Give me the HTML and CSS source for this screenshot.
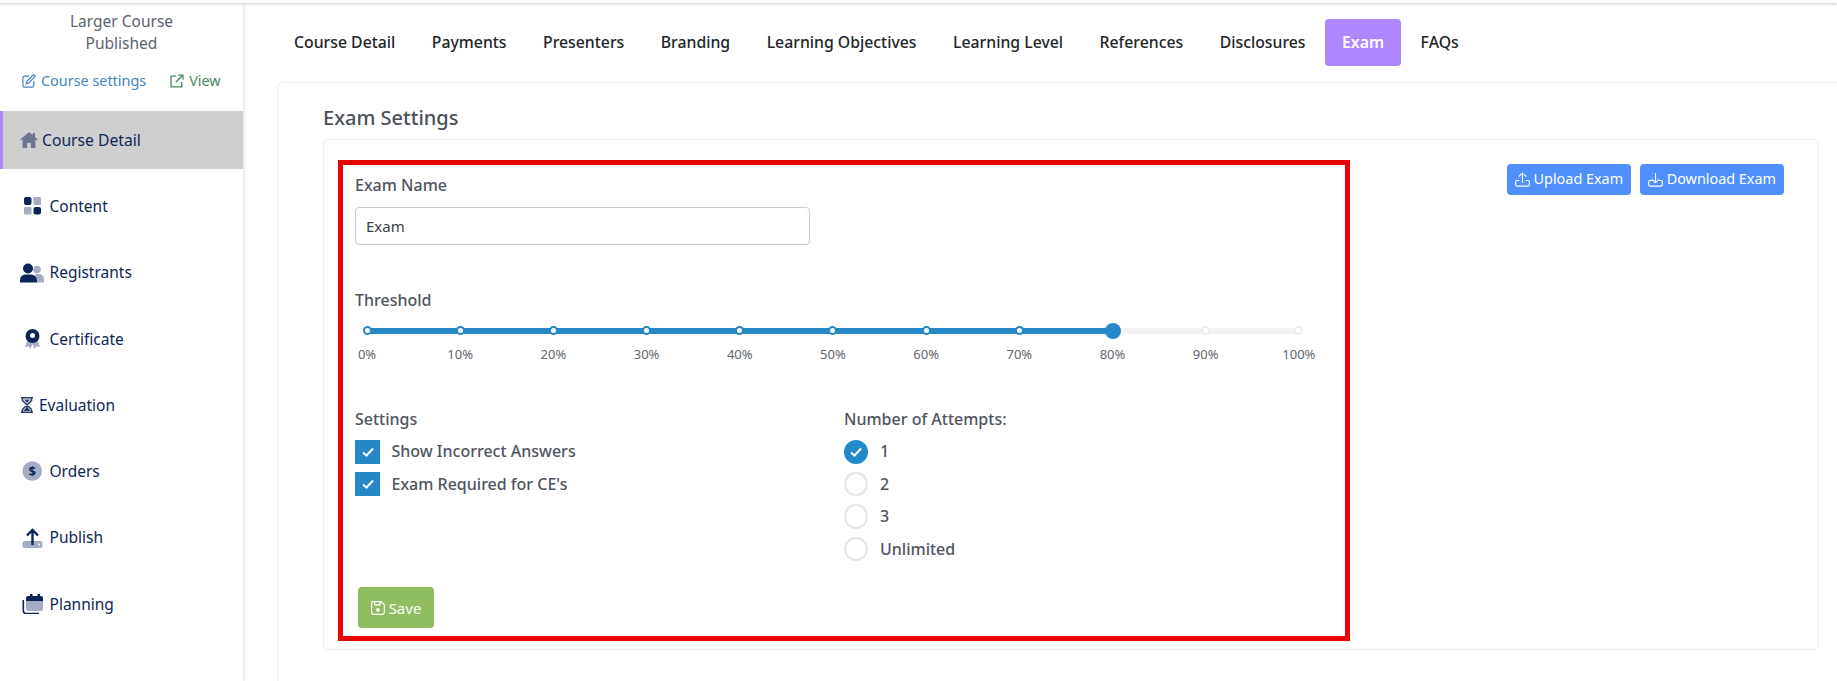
FILE: index.html
```html
<!DOCTYPE html>
<html lang="en">
<head>
<meta charset="utf-8">
<title>Exam Settings</title>
<link rel="stylesheet" href="styles.css">
</head>
<body>
<div class="topline"></div>
<div class="app">
  <aside class="sidebar">
    <div class="course-title">Larger Course<br>Published</div>
    <div class="course-links">
      <a class="link link-blue"><svg class="lnk-ico" viewBox="0 0 16 16" fill="none" stroke="currentColor" stroke-width="1.4"><path d="M8 2.5H3a2 2 0 0 0-2 2V13a2 2 0 0 0 2 2h8.5a2 2 0 0 0 2-2V8"/><path d="M5.5 8.5 12.6 1.4a1.2 1.2 0 0 1 1.9 1.9L7.5 10.4l-2.6.7z"/></svg>Course settings</a>
      <a class="link link-green"><svg class="lnk-ico" viewBox="0 0 16 16" fill="none" stroke="currentColor" stroke-width="1.5"><path d="M7 2.5H1.2v12.3h12.3V9"/><path d="M6.5 9.5 14.5 1.5M9.5 1.2h5.3v5.3"/></svg>View</a>
    </div>
    <nav class="nav">
      <a class="nav-item active"><svg class="ico ico-house" viewBox="0 0 18 16"><path fill="#6d7690" d="M9 0 .3 7.4l.8 1L2.6 7.2V16h4.6v-5h3.6v5h4.6V7.2l1.5 1.2.8-1L15 5V.9h-2.2v2.2z"/></svg><span>Course Detail</span></a>
      <a class="nav-item"><svg class="ico ico-std" viewBox="0 0 24 20"><rect x="4" y="1" width="7.5" height="8" rx="2" fill="#0c2456"/><rect x="13.5" y="1" width="7.5" height="8" rx="1.2" fill="#a5adc4"/><rect x="4" y="11" width="7.5" height="7.5" rx="1.2" fill="#a5adc4"/><rect x="13.5" y="11" width="7.5" height="7.5" rx="2" fill="#0c2456"/></svg><span>Content</span></a>
      <a class="nav-item"><svg class="ico ico-std" viewBox="0 0 24 20"><circle cx="17" cy="6.5" r="3.8" fill="#a5adc4"/><path fill="#a5adc4" d="M15 11h4a5 5 0 0 1 5 5v3.500h-7z"/><circle cx="8" cy="5.500" r="5" fill="#0c2456"/><path fill="#0c2456" d="M5 11.500h6a6 6 0 0 1 6 6v2H0v-2a6 6 0 0 1 5-6z"/></svg><span>Registrants</span></a>
      <a class="nav-item"><svg class="ico ico-std" viewBox="0 0 24 20"><path fill="#a5adc4" d="M7.500 11 5 18l3.500-.8 2 2.800L12.500 15l2 5 2-2.800 3.500.8-2.500-7z"/><circle cx="12.500" cy="7" r="7" fill="#0c2456"/><circle cx="12.500" cy="6.500" r="2.500" fill="#fff"/></svg><span>Certificate</span></a>
      <a class="nav-item"><svg class="ico ico-glass" viewBox="0 0 12 16" fill="none" stroke="#2a3c68" stroke-width="1.6"><path d="M0 .8h12M0 15.200h12M1.500 1v2.500L10.500 12.500V15M10.500 1v2.500L1.500 12.500V15"/><path fill="#2a3c68" stroke="none" d="M3 2.500h6L6 6zM6 9.500l3.500 4.500h-7z"/></svg><span>Evaluation</span></a>
      <a class="nav-item"><svg class="ico ico-std" viewBox="0 0 24 20"><circle cx="12.200" cy="10" r="9.800" fill="#a5adc4"/><text class="dollar" x="12.200" y="14.500" text-anchor="middle">$</text></svg><span>Orders</span></a>
      <a class="nav-item"><svg class="ico ico-std" viewBox="0 0 24 20"><rect x="2.500" y="13" width="20" height="7" rx="2.500" fill="#a5adc4"/><circle cx="19" cy="16.500" r="1.100" fill="#fff"/><path fill="none" stroke="#0c2456" stroke-width="2.400" d="M12.500 17V2M7 7.500l5.500-5.500L18 7.500"/></svg><span>Publish</span></a>
      <a class="nav-item"><svg class="ico ico-std" viewBox="0 0 24 20"><path fill="#a5adc4" d="M6 4h17v11a2 2 0 0 1-2 2H8a2 2 0 0 1-2-2z"/><path fill="#0c2456" d="M6 7V4a2 2 0 0 1 2-2h2V0h2.500v2h5V0H20v2h1a2 2 0 0 1 2 2v3z"/><path fill="none" stroke="#0c2456" stroke-width="1.600" d="M3.300 6v10.500a3 3 0 0 0 3 3H19"/></svg><span>Planning</span></a>
    </nav>
  </aside>
  <main class="main">
    <div class="tabs">
      <a class="tab">Course Detail</a>
      <a class="tab">Payments</a>
      <a class="tab">Presenters</a>
      <a class="tab">Branding</a>
      <a class="tab">Learning Objectives</a>
      <a class="tab">Learning Level</a>
      <a class="tab">References</a>
      <a class="tab">Disclosures</a>
      <a class="tab tab-active">Exam</a>
      <a class="tab">FAQs</a>
    </div>
    <section class="outer-card">
      <h2 class="heading">Exam Settings</h2>
      <div class="inner-card">
        <form class="red-box">
          <label class="label">Exam Name</label>
          <input class="text-input" type="text" value="Exam">
          <label class="label label-threshold">Threshold</label>
          <div class="slider">
            <div class="track"></div>
            <div class="track-fill"></div>
            <div class="ticks">
              <div class="tick"><span class="dot on"></span><span class="pct">0%</span></div>
              <div class="tick"><span class="dot on"></span><span class="pct">10%</span></div>
              <div class="tick"><span class="dot on"></span><span class="pct">20%</span></div>
              <div class="tick"><span class="dot on"></span><span class="pct">30%</span></div>
              <div class="tick"><span class="dot on"></span><span class="pct">40%</span></div>
              <div class="tick"><span class="dot on"></span><span class="pct">50%</span></div>
              <div class="tick"><span class="dot on"></span><span class="pct">60%</span></div>
              <div class="tick"><span class="dot on"></span><span class="pct">70%</span></div>
              <div class="tick"><span class="handle"></span><span class="pct">80%</span></div>
              <div class="tick"><span class="dot"></span><span class="pct">90%</span></div>
              <div class="tick"><span class="dot"></span><span class="pct">100%</span></div>
            </div>
          </div>
          <div class="options">
            <div class="opt-col">
              <div class="label">Settings</div>
              <div class="opt-list">
                <div class="opt"><span class="box"><svg class="tick-mark" viewBox="0 0 12 10"><path d="M1 5.500 4.500 8.500 11 1.500"/></svg></span>Show Incorrect Answers</div>
                <div class="opt"><span class="box"><svg class="tick-mark" viewBox="0 0 12 10"><path d="M1 5.500 4.500 8.500 11 1.500"/></svg></span>Exam Required for CE's</div>
              </div>
            </div>
            <div class="opt-col">
              <div class="label">Number of Attempts:</div>
              <div class="opt-list">
                <div class="opt"><span class="radio checked"><svg class="tick-mark" viewBox="0 0 12 10"><path d="M1 5.500 4.500 8.500 11 1.500"/></svg></span>1</div>
                <div class="opt"><span class="radio"></span>2</div>
                <div class="opt"><span class="radio"></span>3</div>
                <div class="opt"><span class="radio"></span>Unlimited</div>
              </div>
            </div>
          </div>
          <button class="btn-save" type="button"><svg class="btn-ico" viewBox="0 0 14 14" fill="none" stroke="#fff" stroke-width="1.200"><path d="M1.800.7h8.500l3 3v7.600a2 2 0 0 1-2 2H2.700a2 2 0 0 1-2-2V2a1.300 1.300 0 0 1 1.100-1.300z"/><path d="M3.700 .8v3h5.500v-3"/><circle cx="7" cy="9" r="1.300" fill="#fff"/></svg>Save</button>
        </form>
        <div class="actions">
          <button class="btn-blue" type="button"><svg class="btn-ico-lg" viewBox="0 0 16 16" fill="none" stroke="#fff" stroke-width="1.200"><path d="M4.500 9H2a1.300 1.300 0 0 0-1.300 1.300v3.400A1.300 1.300 0 0 0 2 15h12a1.300 1.300 0 0 0 1.300-1.300v-3.400A1.300 1.300 0 0 0 14 9h-2.500"/><path d="M8 11.500V1M4 5l4-4 4 4"/></svg>Upload Exam</button>
          <button class="btn-blue" type="button"><svg class="btn-ico-lg" viewBox="0 0 16 16" fill="none" stroke="#fff" stroke-width="1.200"><path d="M4.500 9H2a1.300 1.300 0 0 0-1.300 1.300v3.400A1.300 1.300 0 0 0 2 15h12a1.300 1.300 0 0 0 1.300-1.300v-3.400A1.300 1.300 0 0 0 14 9h-2.500"/><path d="M8 1v10.500M4 7.500l4 4 4-4"/></svg>Download Exam</button>
        </div>
      </div>
    </section>
  </main>
</div>
</body>
</html>
```
FILE: styles.css
```css
* { box-sizing: border-box; }
html, body { margin: 0; height: 681px; overflow: hidden; background: #fff; }
body { font-family: "Noto Sans", "Open Sans", sans-serif; font-size: 15px; line-height: 22.5px; color: #4f5560; }

.topline { height: 3px; background: #fff; box-shadow: 0 1px 3px rgba(0,0,0,.22); position: relative; z-index: 2; }
.app { display: flex; height: 678px; }

.sidebar { width: 244px; flex: none; border-right: 1px solid #eee; box-shadow: 1px 0 3px rgba(0,0,0,.08); }
.course-title { text-align: center; padding-top: 7px; color: #5b6270; font-size: 15.500px; line-height: 22px; }
.course-links { display: flex; gap: 24px; padding: 16px 0 0 22px; height: 54px; margin-bottom: 3px; }
.link { display: flex; align-items: center; height: 22.5px; white-space: nowrap; font-size: 14.400px; }
.link-blue { color: #4485c1; }
.link-green { color: #4a8760; }
.lnk-ico { width: 14px; height: 14px; margin-right: 5px; }

.nav { display: flex; flex-direction: column; gap: 8.280px; }
.nav-item { display: flex; align-items: center; height: 58px; padding-left: 20px; color: #0f2757; font-size: 15.500px; }
.nav-item.active { background: #cfcfcf; border-left: 3px solid #ae85fc; padding-left: 17px; font-size: 15.700px; }
.ico { flex: none; }
.ico-house { width: 18px; height: 16px; margin-right: 4px; }
.ico-std { width: 24px; height: 20px; margin-right: 5.500px; }
.ico-glass { width: 12px; height: 16px; margin: 0 6px 0 1px; }
.dollar { font-size: 13px; font-weight: 700; fill: #0c2456; font-family: "Noto Sans", sans-serif; }

.main { flex: 1; min-width: 0; padding-left: 33px; }
.tabs { display: flex; gap: 2.500px; padding-top: 16px; height: 79px; }
.tab { height: 46px; padding: 0 17px; display: flex; align-items: center; font-weight: 500; font-size: 15.800px; color: #212529; border-radius: 4px; white-space: nowrap; }
.tab-active { height: 47px; padding-bottom: 1px; background: #ae87fe; color: #fff; font-weight: 600; }

.outer-card { border: 1px solid #eee; border-right: 0; border-bottom: 0; border-radius: 6px 0 0 0; height: 620px; padding: 20px 0 0 45px; }
.heading { margin: 0; font-size: 20px; line-height: 30px; font-weight: 500; color: #4a5058; height: 35.500px; }
.inner-card { width: 1496px; height: 511px; border: 1px solid #eee; border-radius: 5px; padding: 20px 34px 0 14px; display: flex; justify-content: space-between; align-items: flex-start; }

.red-box { width: 1012px; height: 481px; border: 5px solid #e80505; padding: 9.500px 12px 0; }
.label { display: block; font-weight: 500; color: #4f5560; font-size: 16px; }
.text-input { display: block; width: 455px; height: 38px; margin-top: 10px; padding: 0 10px; border: 1px solid #c8cacc; border-radius: 4px; font: inherit; color: #3a3f47; background: #fff; outline: 0; }
.label-threshold { margin-top: 44px; }

.slider { position: relative; margin: 11.500px 0 0 12px; width: 932px; height: 41px; }
.track, .track-fill { position: absolute; top: 5px; left: 0; height: 6px; border-radius: 3px; }
.track { right: 0; background: #f2f2f2; }
.track-fill { width: 80%; background: #2589c7; }
.ticks { position: relative; display: flex; justify-content: space-between; }
.tick { width: 0; display: flex; flex-direction: column; align-items: center; }
.dot, .handle { flex: none; border-radius: 50%; }
.dot { width: 9px; height: 9px; margin: 3.500px 0; background: #fff; border: 2px solid #ececec; }
.dot.on { border-color: #2589c7; }
.handle { width: 16px; height: 16px; background: #2589c7; }
.pct { margin-top: 6px; font-size: 13px; line-height: 18px; color: #62666d; white-space: nowrap; }

.options { display: grid; grid-template-columns: 489px 1fr; margin-top: 44px; }
.opt-list { display: flex; flex-direction: column; gap: 8.100px; margin-top: 9.500px; }
.opt { display: flex; align-items: center; height: 24.400px; font-weight: 500; font-size: 16px; color: #4f5560; }
.box, .radio { flex: none; width: 25px; height: 24.400px; margin-right: 11.500px; display: flex; align-items: center; justify-content: center; }
.box { background: #2589c7; }
.radio { width: 24px; margin-right: 12px; border: 2px solid #e6e6e6; border-radius: 50%; background: #fff; }
.radio.checked { background: #2589c7; border-color: #2589c7; }
.tick-mark { width: 12px; height: 10px; fill: none; stroke: #fff; stroke-width: 2; }

.btn-save { display: flex; align-items: center; justify-content: center; width: 76px; height: 41px; margin: 26px 0 0 3px; border: 0; border-radius: 4px; background: #8fbd5f; color: #fff; font: inherit; font-size: 15px; padding: 0; }
.btn-ico { width: 14px; height: 14px; margin-right: 4px; }

.actions { display: flex; gap: 9px; padding-top: 4px; }
.btn-blue { display: flex; align-items: center; height: 31px; padding: 0 8px; border: 0; border-radius: 4px; background: #4f8ffe; color: #fff; font: inherit; font-size: 14.400px; white-space: nowrap; }
.btn-ico-lg { width: 15px; height: 15px; margin-right: 3.500px; }
```
